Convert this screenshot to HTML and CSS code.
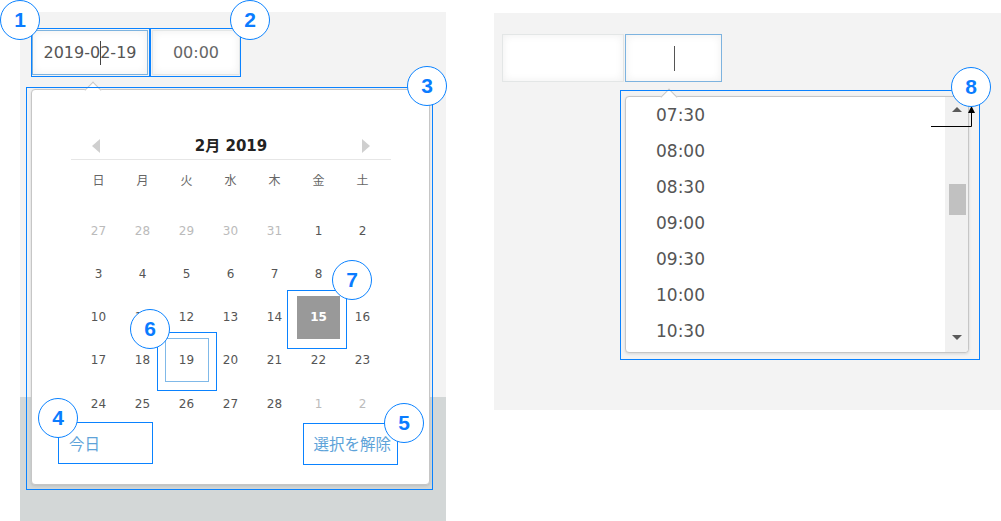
FILE: index.html
```html
<!DOCTYPE html>
<html lang="ja">
<head>
    <meta charset="UTF-8">
    <title>日付と時刻の選択</title>
    <link rel="stylesheet" href="styles.css">
</head>
<body>
    <div class="shot shot-date">
        <div class="field-row">
            <div class="field field-date is-focus">2019-0<span class="caret"></span>2-19</div>
            <div class="field field-time">00:00</div>
        </div>
        <div class="popup calendar">
            <div class="cal-head">
                <span class="nav nav-prev"></span>
                <span class="cal-title">2月 2019</span>
                <span class="nav nav-next"></span>
            </div>
            <div class="cal-grid">
                <div class="wd">日</div><div class="wd">月</div><div class="wd">火</div><div class="wd">水</div><div class="wd">木</div><div class="wd">金</div><div class="wd">土</div>
            </div>
            <div class="cal-grid cal-days">
                <div class="day muted">27</div><div class="day muted">28</div><div class="day muted">29</div><div class="day muted">30</div><div class="day muted">31</div><div class="day">1</div><div class="day">2</div>
                <div class="day">3</div><div class="day">4</div><div class="day">5</div><div class="day">6</div><div class="day">7</div><div class="day">8</div><div class="day">9</div>
                <div class="day">10</div><div class="day">11</div><div class="day">12</div><div class="day">13</div><div class="day">14</div><div class="day"><span class="selected">15</span></div><div class="day">16</div>
                <div class="day">17</div><div class="day">18</div><div class="day"><span class="today">19</span></div><div class="day">20</div><div class="day">21</div><div class="day">22</div><div class="day">23</div>
                <div class="day">24</div><div class="day">25</div><div class="day">26</div><div class="day">27</div><div class="day">28</div><div class="day muted">1</div><div class="day muted">2</div>
            </div>
            <div class="cal-foot">
                <span class="link">今日</span>
                <span class="link">選択を解除</span>
            </div>
        </div>
    </div>

    <div class="shot shot-time">
        <div class="field-row">
            <div class="field field-blank"></div>
            <div class="field field-time2 is-focus"><span class="caret caret-tall"></span></div>
        </div>
        <div class="popup timelist">
            <ul class="times">
                <li>07:30</li>
                <li>08:00</li>
                <li>08:30</li>
                <li>09:00</li>
                <li>09:30</li>
                <li>10:00</li>
                <li>10:30</li>
            </ul>
            <div class="scrollbar">
                <span class="sb-up"></span>
                <span class="sb-thumb"></span>
                <span class="sb-down"></span>
            </div>
        </div>
    </div>

    <!-- annotation layer -->
    <div class="notes">
        <div class="box" style="left:31px;top:28px;width:119px;height:49px"></div>
        <div class="box" style="left:150px;top:28px;width:91px;height:49px"></div>
        <div class="box" style="left:26px;top:87px;width:407px;height:403px"></div>
        <div class="box" style="left:58px;top:422px;width:95px;height:42px"></div>
        <div class="box" style="left:303px;top:423px;width:95px;height:42px"></div>
        <div class="box" style="left:157px;top:332px;width:60px;height:59px"></div>
        <div class="box" style="left:287px;top:290px;width:60px;height:59px"></div>
        <div class="box" style="left:620px;top:90px;width:360px;height:270px"></div>

        <svg class="pointer" width="1001" height="521" viewBox="0 0 1001 521">
            <path d="M931 126.5 H971.5 V111" fill="none" stroke="#000" stroke-width="1"/>
            <path d="M971.5 106 L975 113 L968 113 Z" fill="#000"/>
        </svg>

        <span class="num" style="left:0;top:0">1</span>
        <span class="num" style="left:230px;top:0">2</span>
        <span class="num" style="left:407px;top:66px">3</span>
        <span class="num" style="left:38px;top:398px">4</span>
        <span class="num" style="left:384px;top:403px">5</span>
        <span class="num" style="left:130px;top:309px">6</span>
        <span class="num" style="left:332px;top:260px">7</span>
        <span class="num" style="left:951px;top:67px">8</span>
    </div>
</body>
</html>
```

FILE: styles.css
```css
* {
    box-sizing: border-box;
}
body {
    margin: 0;
    width: 1001px;
    height: 521px;
    overflow: hidden;
    background: #fff;
    color: #555;
    font-family: "DejaVu Sans", "Noto Sans CJK JP", sans-serif;
    display: flex;
    align-items: flex-start;
    position: relative;
}
.shot {
    display: flex;
    flex-direction: column;
}
.shot-date {
    margin: 12px 0 0 20px;
    width: 426px;
    height: 509px;
    padding: 18px 0 0 12px;
    background: linear-gradient(#f3f3f3 0, #f3f3f3 385px, #d3d7d7 385px);
}
.shot-time {
    margin: 13px 0 0 48px;
    width: 507px;
    height: 397px;
    padding: 21px 0 0 8px;
    background: #f3f3f3;
}
.field-row {
    display: flex;
}
.field {
    height: 45px;
    background: #fff;
    border: 1px solid #e3e6e6;
    box-shadow: inset 0 0 8px rgba(0, 0, 0, 0.07);
    display: flex;
    align-items: center;
    justify-content: center;
    font-size: 16px;
    color: #555;
}
.field.is-focus {
    border-color: #7db3df;
}
.field-date {
    width: 116px;
}
.field-time {
    width: 88px;
    margin-left: 4px;
    color: #666;
}
.field-blank {
    width: 122px;
    height: 48px;
}
.field-time2 {
    width: 97px;
    height: 48px;
    margin-left: 1px;
}
.caret {
    display: inline-block;
    width: 1px;
    height: 24px;
    background: #444;
    margin-right: -1px;
}
.caret-tall {
    height: 25px;
    background: #555;
}
.popup {
    position: relative;
    background: #fff;
    border: 1px solid #c6c6c6;
    border-radius: 4px;
    box-shadow: 0 1px 3px rgba(0, 0, 0, 0.12);
}
.popup::before {
    content: "";
    position: absolute;
    top: -6px;
    width: 11px;
    height: 11px;
    background: #fff;
    border-left: 1px solid #c6c6c6;
    border-top: 1px solid #c6c6c6;
    transform: rotate(45deg);
}
.calendar {
    margin: 14px 0 0 -1px;
    width: 399px;
    height: 396px;
    display: flex;
    flex-direction: column;
    align-items: center;
}
.calendar::before {
    left: 55px;
}
.cal-head {
    margin-top: 45px;
    width: 320px;
    height: 25px;
    border-bottom: 1px solid #e6e6e6;
    display: flex;
    align-items: flex-start;
    justify-content: space-between;
    padding: 0 20px 0 21px;
}
.cal-title {
    font-size: 15px;
    font-weight: bold;
    color: #222;
    line-height: 22px;
}
.nav {
    width: 0;
    height: 0;
    margin-top: 4px;
    border-top: 7px solid transparent;
    border-bottom: 7px solid transparent;
}
.nav-prev {
    border-right: 8px solid #cfcfcf;
}
.nav-next {
    border-left: 8px solid #cfcfcf;
}
.cal-grid {
    width: 308px;
    display: grid;
    grid-template-columns: repeat(7, 44px);
}
.wd {
    height: 42px;
    line-height: 42px;
    text-align: center;
    font-size: 12px;
    color: #666;
}
.cal-days {
    margin-top: 7px;
    grid-auto-rows: 43.25px;
}
.day {
    display: flex;
    align-items: center;
    justify-content: center;
    font-size: 12px;
    color: #555;
}
.day.muted {
    color: #bbb;
}
.selected {
    width: 43px;
    height: 43px;
    background: #999;
    color: #fff;
    font-weight: bold;
    display: flex;
    align-items: center;
    justify-content: center;
}
.today {
    width: 45px;
    height: 44px;
    border: 1px solid #80b9e8;
    display: flex;
    align-items: center;
    justify-content: center;
}
.cal-foot {
    width: 100%;
    margin-top: 10px;
    display: flex;
    justify-content: space-between;
    padding: 0 38px 0 37px;
}
.link {
    font-size: 15.5px;
    line-height: 20px;
    color: #5ea3d9;
}
.timelist {
    margin: 14px 0 0 123px;
    width: 344px;
    height: 257px;
    display: flex;
}
.timelist::before {
    left: 37px;
}
.times {
    list-style: none;
    margin: 0;
    padding: 0;
    flex: 1;
    overflow: hidden;
}
.times li {
    height: 36px;
    line-height: 36px;
    padding-left: 30px;
    font-size: 17px;
    color: #555;
}
.scrollbar {
    width: 23px;
    background: #f1f1f1;
    border-radius: 0 4px 4px 0;
    display: flex;
    flex-direction: column;
    align-items: center;
    padding-top: 10px;
}
.sb-up,
.sb-down {
    width: 0;
    height: 0;
    border-left: 5px solid transparent;
    border-right: 5px solid transparent;
    margin-left: 1px;
}
.sb-up {
    border-bottom: 5px solid #5a5a5a;
}
.sb-down {
    border-top: 5px solid #5a5a5a;
    margin-top: auto;
    margin-bottom: 12px;
}
.sb-thumb {
    width: 17px;
    height: 31px;
    margin-top: 72px;
    margin-left: 2px;
    background: #c1c1c1;
}
.notes {
    position: absolute;
    left: 0;
    top: 0;
    width: 1001px;
    height: 521px;
    pointer-events: none;
}
.box {
    position: absolute;
    border: 1px solid #0a82ff;
}
.pointer {
    position: absolute;
    left: 0;
    top: 0;
}
.num {
    position: absolute;
    width: 40px;
    height: 40px;
    border-radius: 50%;
    border: 1px solid #0a82ff;
    background: #fff;
    color: #0a7cff;
    font-family: "Liberation Sans", Arial, sans-serif;
    font-size: 21px;
    font-weight: bold;
    display: flex;
    align-items: center;
    justify-content: center;
}
```
